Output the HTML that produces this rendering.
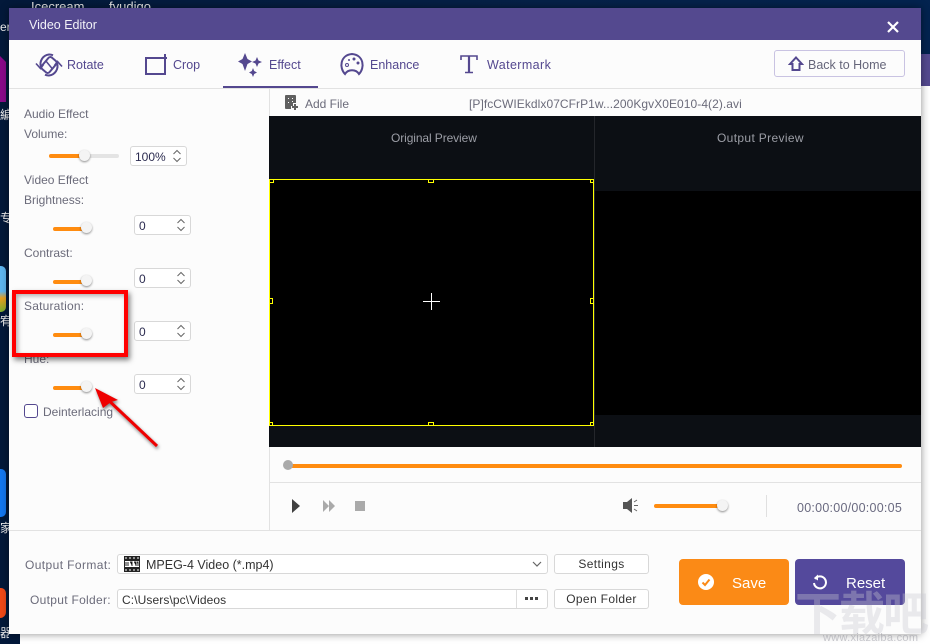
<!DOCTYPE html>
<html><head><meta charset="utf-8">
<style>
html,body{margin:0;padding:0}
body{width:930px;height:644px;overflow:hidden;position:relative;background:#03193a;font-family:"Liberation Sans","Noto Sans CJK SC",sans-serif;font-size:12px;color:#6b6b7a}
.a{position:absolute}
.t{position:absolute;white-space:nowrap;line-height:14px}
.tab{color:#54488f;font-size:12.5px}
.sl{position:absolute;height:4px;border-radius:2px;background:#ff8c10}
.kn{position:absolute;width:11px;height:11px;border-radius:50%;background:#f4f4f4;box-shadow:0 1px 2px rgba(0,0,0,.45)}
.sp{position:absolute;width:55px;height:18px;border:1px solid #d8d8d8;border-radius:3px;background:#fff;color:#2c2c50;line-height:20px;text-indent:4px;box-sizing:content-box}
.sp svg{position:absolute;right:4px;top:2px}
.box{position:absolute;border:1px solid #d8d8d8;border-radius:3px;background:#fff;box-sizing:border-box;color:#333;line-height:19px;letter-spacing:.35px}
.h{position:absolute;background:#000;border:1px solid #ff0;box-sizing:border-box}
</style></head><body>
<div class="a" style="left:0;top:0;width:930px;height:60px;background:linear-gradient(90deg,#03193a,#062148 60%,#03234f)"></div>
<div class="t" style="left:31px;top:0;color:#e8e8e8;height:8px;overflow:hidden;line-height:14px;font-size:13px">Icecream</div>
<div class="t" style="left:109px;top:0;color:#e8e8e8;height:8px;overflow:hidden;line-height:14px;font-size:13px">fyudigo</div>
<div class="t" style="left:0;top:20px;color:#eee;width:9px;overflow:hidden">er</div>
<svg class="a" style="left:0;top:54px" width="9" height="48"><path d="M0 2L6 8V48H0Z" fill="#8a0a8a"/></svg>
<div class="t" style="left:0;top:108px;color:#eee;width:9px;overflow:hidden">編</div>
<div class="t" style="left:0;top:211px;color:#eee;width:9px;overflow:hidden">专</div>
<div class="a" style="left:0;top:266px;width:6px;height:46px;border-radius:0 5px 5px 0;background:linear-gradient(#5fb6f0 55%,#e9a020 70%,#7cb030)"></div>
<div class="t" style="left:0;top:314px;color:#eee;width:9px;overflow:hidden">宥</div>
<div class="a" style="left:0;top:469px;width:6px;height:48px;border-radius:0 5px 5px 0;background:#1478f0"></div>
<div class="t" style="left:0;top:521px;color:#eee;width:9px;overflow:hidden">家</div>
<div class="a" style="left:0;top:588px;width:6px;height:30px;border-radius:0 10px 12px 0;background:#f04a18"></div>
<div class="t" style="left:0;top:626px;color:#eee;width:9px;overflow:hidden">器</div>
<div class="a" style="left:921px;top:54px;width:9px;height:32px;background:#54498f"></div>
<div class="a" style="left:921px;top:86px;width:9px;height:558px;background:#fff"></div>
<div class="a" style="left:20px;top:634px;width:910px;height:10px;background:#fff"></div>

<!-- dialog -->
<div class="a" style="left:9px;top:8px;width:912px;height:626px;background:#fcfcfc;box-shadow:0 0 8px rgba(0,0,0,.45)"></div>
<div class="a" style="left:9px;top:8px;width:912px;height:32px;background:#54498f"></div>
<div class="t" style="left:29px;top:18px;color:#f2f2f8;font-size:12.5px">Video Editor</div>
<svg class="a" style="left:886px;top:20px" width="14" height="14"><path d="M2 2L12 12M12 2L2 12" stroke="#fff" stroke-width="2.2"/></svg>

<!-- tabs -->
<svg class="a" style="left:34px;top:52px" width="30" height="26" fill="none" stroke="#54488f" stroke-width="2"><rect x="10" y="5.500" width="10" height="15" rx="2.500" transform="rotate(40 15 13)"/><path d="M11.500 8.500L18.500 17" stroke-width="1.500"/><path d="M7 15A9.500 9.500 0 0 1 15 2.500a9 9 0 0 1 4 .8M23 11A9.500 9.500 0 0 1 15 23.500a9 9 0 0 1-4-.8"/><path d="M2 11.500L6.500 16.500 9.500 12.500M28 14.500L23.500 9.500 20.500 13.500" stroke-width="1.600"/></svg>
<div class="t tab" style="left:67px;top:58px">Rotate</div>
<svg class="a" style="left:144px;top:53px" width="24" height="24" fill="none" stroke="#54488f" stroke-width="2"><path d="M2 4V21H21V1M2 5H23"/></svg>
<div class="t tab" style="left:173px;top:58px">Crop</div>
<svg class="a" style="left:238px;top:52px" width="26" height="25" fill="#54488f"><path d="M7 1L9.500 7 14 9.500 9.500 12 7 19 4.500 12 0 9.500 4.500 7Z"/><path d="M19 5L20.500 8.500 24 10 20.500 11.500 19 15 17.500 11.500 14 10 17.500 8.500Z"/><path d="M15 16L16.200 19 19 20.500 16.200 22 15 25 13.800 22 11 20.500 13.800 19Z"/></svg>
<div class="t tab" style="left:269px;top:58px">Effect</div>
<div class="a" style="left:223px;top:86px;width:95px;height:2px;background:#54488f"></div>
<svg class="a" style="left:339px;top:52px" width="26" height="26" fill="none" stroke="#54488f" stroke-width="2"><path d="M6 22C0 16 1 3 13 2 25 3 26 16 20 22 17 17 9 17 6 22Z"/><circle cx="8" cy="13" r="1.500" stroke-width="1"/><circle cx="10" cy="8" r="1" fill="#54488f" stroke="none"/><circle cx="15" cy="7" r="1.500" fill="#54488f" stroke="none"/><circle cx="19" cy="11" r="1.500" fill="#54488f" stroke="none"/></svg>
<div class="t tab" style="left:370px;top:58px">Enhance</div>
<svg class="a" style="left:460px;top:54px" width="18" height="20" fill="none" stroke="#54488f"><path d="M1 6V2H17V6" stroke-width="1.600"/><path d="M9 2V18" stroke-width="2.200"/><path d="M5 18.500H13" stroke-width="1.500"/></svg>
<div class="t tab" style="left:487px;top:58px;letter-spacing:.4px">Watermark</div>
<div class="a" style="left:774px;top:50px;width:131px;height:27px;border:1px solid #c9c3e2;border-radius:3px;box-sizing:border-box"></div>
<svg class="a" style="left:788px;top:56px" width="16" height="16" fill="none" stroke="#54488f" stroke-width="2"><path d="M8 1.500L14 8H11.500V14H4.500V8H2Z"/></svg>
<div class="t" style="left:808px;top:58px;font-size:12.500px;color:#66667a">Back to Home</div>
<div class="a" style="left:9px;top:88px;width:912px;height:1px;background:#e2e2e2"></div>

<!-- file bar -->
<div class="a" style="left:269px;top:89px;width:1px;height:441px;background:#e2e2e2"></div>
<svg class="a" style="left:285px;top:95px" width="14" height="15"><path d="M0 1Q0 0 1 0H10Q11 0 11 1V8H8V11H6V14H1Q0 14 0 13Z" fill="#606060"/><path d="M10 9V15M7 12H13" stroke="#606060" stroke-width="2"/><path d="M3 3h1v1H3zM7 3h1v1H7zM3 7h1v1H3zM7 6h1v1H7z" fill="#fff"/></svg>
<div class="t" style="left:305px;top:97px">Add File</div>
<div class="t" style="left:469px;top:97px;letter-spacing:.06px">[P]fcCWIEkdlx07CFrP1w...200KgvX0E010-4(2).avi</div>

<!-- preview -->
<div class="a" style="left:269px;top:116px;width:652px;height:331px;background:#0c0f14"></div>
<div class="a" style="left:594px;top:116px;width:1px;height:331px;background:#24262b"></div>
<div class="t" style="left:391px;top:131px;color:#9c9ea6;letter-spacing:-.1px">Original Preview</div>
<div class="t" style="left:717px;top:131px;color:#9c9ea6;letter-spacing:.35px">Output Preview</div>
<div class="a" style="left:595px;top:191px;width:326px;height:224px;background:#000"></div>
<div class="a" style="left:269px;top:179px;width:325px;height:247px;background:#000;border:1px solid #ff0;box-sizing:border-box"></div>
<div class="h" style="left:269px;top:179px;width:5px;height:4px"></div>
<div class="h" style="left:428px;top:179px;width:6px;height:4px"></div>
<div class="h" style="left:590px;top:179px;width:4px;height:4px"></div>
<div class="h" style="left:269px;top:298px;width:4px;height:6px"></div>
<div class="h" style="left:590px;top:298px;width:4px;height:6px"></div>
<div class="h" style="left:269px;top:422px;width:4px;height:4px"></div>
<div class="h" style="left:428px;top:422px;width:6px;height:4px"></div>
<div class="h" style="left:590px;top:422px;width:4px;height:4px"></div>
<svg class="a" style="left:423px;top:293px" width="17" height="17"><path d="M8.500 0V17M0 8.500H17" stroke="#fff" stroke-width="1"/></svg>

<!-- left panel -->
<div class="t" style="left:24px;top:107px">Audio Effect</div>
<div class="t" style="left:24px;top:127px">Volume:</div>
<div class="a" style="left:49px;top:154px;width:70px;height:4px;border-radius:2px;background:#e4e4e4"></div>
<div class="sl" style="left:49px;top:154px;width:35px"></div>
<div class="kn" style="left:79px;top:150px"></div>
<div class="sp" style="left:130px;top:146px;text-indent:4px;width:55px">100%<svg width="10" height="14" fill="none" stroke="#666"><path d="M1.500 5L5 1.500 8.500 5M1.500 9L5 12.500 8.500 9"/></svg></div>
<div class="t" style="left:24px;top:173px">Video Effect</div>
<div class="t" style="left:24px;top:193px">Brightness:</div>
<div class="sl" style="left:53px;top:227px;width:33px"></div><div class="kn" style="left:81px;top:222px"></div>
<div class="sp" style="left:134px;top:215px">0<svg width="10" height="14" fill="none" stroke="#666"><path d="M1.500 5L5 1.500 8.500 5M1.500 9L5 12.500 8.500 9"/></svg></div>
<div class="t" style="left:24px;top:246px">Contrast:</div>
<div class="sl" style="left:53px;top:280px;width:33px"></div><div class="kn" style="left:81px;top:275px"></div>
<div class="sp" style="left:134px;top:268px">0<svg width="10" height="14" fill="none" stroke="#666"><path d="M1.500 5L5 1.500 8.500 5M1.500 9L5 12.500 8.500 9"/></svg></div>
<div class="t" style="left:24px;top:299px;letter-spacing:.2px">Saturation:</div>
<div class="sl" style="left:53px;top:333px;width:33px"></div><div class="kn" style="left:81px;top:328px"></div>
<div class="sp" style="left:134px;top:321px">0<svg width="10" height="14" fill="none" stroke="#666"><path d="M1.500 5L5 1.500 8.500 5M1.500 9L5 12.500 8.500 9"/></svg></div>
<div class="t" style="left:24px;top:352px">Hue:</div>
<div class="sl" style="left:53px;top:386px;width:33px"></div><div class="kn" style="left:81px;top:381px"></div>
<div class="sp" style="left:134px;top:374px">0<svg width="10" height="14" fill="none" stroke="#666"><path d="M1.500 5L5 1.500 8.500 5M1.500 9L5 12.500 8.500 9"/></svg></div>
<div class="a" style="left:24px;top:404px;width:14px;height:14px;border:1px solid #54488f;border-radius:3px;box-sizing:border-box;background:#fff"></div>
<div class="t" style="left:43px;top:405px">Deinterlacing</div>

<!-- red annotations -->
<div class="a" style="left:12px;top:290px;width:116px;height:67px;border:4px solid #f00;box-sizing:border-box;box-shadow:2px 3px 5px rgba(0,0,0,.5),inset 2px 2px 5px rgba(0,0,0,.3)"></div>
<svg class="a" style="left:85px;top:380px;filter:drop-shadow(1px 2px 1.500px rgba(0,0,0,.5))" width="85" height="75"><path d="M18 15L72 66" stroke="#ee0000" stroke-width="3"/><path d="M10 8L33 20 26 22 18 28Z" fill="#ee0000"/></svg>

<!-- player -->
<div class="a" style="left:270px;top:482px;width:651px;height:1px;background:#e2e2e2"></div>
<div class="a" style="left:288px;top:464px;width:614px;height:4px;border-radius:2px;background:#ff8c10"></div>
<div class="a" style="left:283px;top:460px;width:10px;height:10px;border-radius:50%;background:#aaa"></div>
<svg class="a" style="left:290px;top:498px" width="80" height="16"><path d="M2 1L10 8 2 15Z" fill="#404040"/><path d="M33 2L39 8 33 14ZM39 2L45 8 39 14Z" fill="#aaa"/><rect x="65" y="3" width="10" height="10" fill="#aaa"/></svg>
<svg class="a" style="left:622px;top:497px" width="17" height="17"><path d="M1 5H5L10 1V16L5 12H1Z" fill="#555"/><path d="M12 5l3-2M12 8.500h4M12 12l3 2" stroke="#666"/></svg>
<div class="sl" style="left:654px;top:504px;width:68px"></div><div class="kn" style="left:717px;top:500px"></div>
<div class="a" style="left:766px;top:495px;width:1px;height:22px;background:#e0e0e0"></div>
<div class="t" style="left:797px;top:501px;font-size:12.500px;color:#6a6a80;letter-spacing:.25px">00:00:00/00:00:05</div>

<!-- bottom -->
<div class="a" style="left:9px;top:530px;width:912px;height:1px;background:#e2e2e2"></div>
<div class="t" style="left:25px;top:558px;letter-spacing:.4px">Output Format:</div>
<div class="box" style="left:117px;top:554px;width:431px;height:20px"></div>
<svg class="a" style="left:124px;top:556px" width="16" height="16"><rect width="16" height="16" fill="#222"/><path d="M1 1.500h2v1H1zM5 1.500h2v1H5zM9 1.500h2v1H9zM13 1.500h2v1h-2zM1 13.500h2v1H1zM5 13.500h2v1H5zM9 13.500h2v1H9zM13 13.500h2v1h-2z" fill="#fff"/><rect x="1" y="5" width="14" height="6" fill="#fff"/><path d="M2 6v4M4 6v4M6 6h2v4M10 6h2v4M13 6h1v4" stroke="#222"/></svg>
<div class="t" style="left:146px;top:558px;color:#333;font-size:12.500px">MPEG-4 Video (*.mp4)</div>
<svg class="a" style="left:531px;top:560px" width="12" height="9" fill="none" stroke="#666" stroke-width="1.200"><path d="M2 2L6 6 10 2"/></svg>
<div class="box" style="left:554px;top:554px;width:95px;height:20px;text-align:center">Settings</div>
<div class="t" style="left:30px;top:593px;letter-spacing:.3px">Output Folder:</div>
<div class="box" style="left:117px;top:589px;width:431px;height:20px"></div>
<div class="a" style="left:516px;top:590px;width:1px;height:18px;background:#ddd"></div>
<div class="t" style="left:122px;top:593px;color:#333;letter-spacing:.1px">C:\Users\pc\Videos</div>
<svg class="a" style="left:524px;top:596px" width="16" height="6"><path d="M1 1h3v3H1zM6 1h3v3H6zM11 1h3v3h-3z" fill="#444"/></svg>
<div class="box" style="left:554px;top:589px;width:95px;height:20px;text-align:center">Open Folder</div>
<div class="a" style="left:679px;top:559px;width:110px;height:46px;border-radius:4px;background:#fb8a16"></div>
<svg class="a" style="left:698px;top:574px" width="16" height="16"><circle cx="8" cy="8" r="8" fill="#fff"/><path d="M4.500 8.500L7 11 11.500 5.500" fill="none" stroke="#fb8a16" stroke-width="2"/></svg>
<div class="t" style="left:732px;top:575px;color:#fff;font-size:15px;line-height:18px">Save</div>
<div class="a" style="left:795px;top:559px;width:110px;height:46px;border-radius:4px;background:#54499c"></div>
<svg class="a" style="left:811px;top:574px" width="16" height="16" fill="none" stroke="#fff" stroke-width="2"><path d="M4 5A6 6 0 1 1 3 9"/><path d="M7 0.500V6.500L3 4Z" fill="#fff" stroke="none"/></svg>
<div class="t" style="left:846px;top:575px;color:#fff;font-size:15px;line-height:18px">Reset</div>

<!-- watermark -->
<div class="t" style="left:795px;top:586px;font-size:46px;line-height:50px;color:rgba(200,200,208,.36);font-family:'Noto Sans CJK SC',sans-serif;font-weight:700;letter-spacing:-2px">下载吧</div>
<div class="t" style="left:823px;top:633px;font-size:11px;line-height:11px;color:rgba(150,150,160,.5);letter-spacing:.3px">www.xiazaiba.com</div>
</body></html>
